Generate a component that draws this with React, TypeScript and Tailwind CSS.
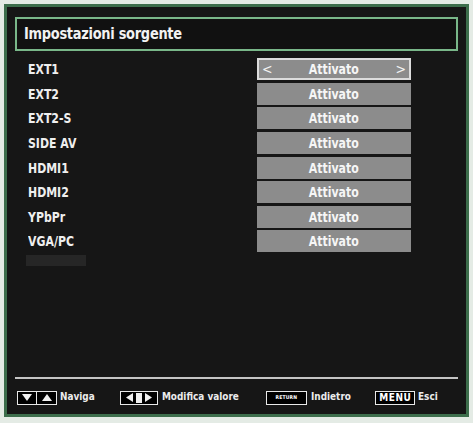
const rows = ["EXT1", "EXT2", "EXT2-S", "SIDE AV", "HDMI1", "HDMI2", "YPbPr", "VGA/PC"];

const font = { fontFamily: '"DejaVu Sans Condensed", "DejaVu Sans", sans-serif' };

function KeyBox({ children, className = "" }: { children: React.ReactNode; className?: string }) {
  return (
    <span className={`flex h-[14px] items-center justify-center border-[1.5px] border-[#e8e8e8] bg-black ${className}`}>
      {children}
    </span>
  );
}

export default function App() {
  return (
    <div className="h-[423px] w-[473px] bg-[#e4ebe5] p-[4px]" style={font}>
      <div className="flex h-[413px] w-[465px] flex-col border-[3px] border-[#3d6e4c] bg-[#161616] px-[8px] pt-[10px]">
        {/* Title */}
        <div className="flex h-[34px] items-center border-2 border-[#79b789] bg-[#111] px-[7px]">
          <span className="origin-left scale-x-[0.9] text-[16px] font-bold tracking-[-0.3px] text-[#f2f2f2]">
            Impostazioni sorgente
          </span>
        </div>

        {/* Source list */}
        <div className="mt-[6px] flex flex-col">
          {rows.map((r, i) => (
            <div key={r} className="flex h-[24.6px] items-center">
              <span className="ml-[13px] w-[229px] origin-left scale-x-[0.9] text-[13.5px] font-bold text-[#efefef]">
                {r}
              </span>
              <div
                className={`relative flex h-[22px] w-[154px] items-center justify-center bg-[#8c8c8c] ${
                  i === 0 ? "border-2 border-[#dcdcdc]" : ""
                }`}
              >
                {i === 0 ? <span className="absolute left-[3px] text-[14px] text-[#f4f4f4]">&lt;</span> : null}
                <span className="scale-x-[0.9] text-[13.5px] font-bold text-[#f6f6f6]">Attivato</span>
                {i === 0 ? <span className="absolute right-[3px] text-[14px] text-[#f4f4f4]">&gt;</span> : null}
              </div>
            </div>
          ))}
          <div className="ml-[11px] mt-[1px] h-[11px] w-[60px] bg-[#262626]" />
        </div>

        <div className="flex-1" />

        {/* Footer */}
        <div className="h-[2px] bg-[#c4c4c4]" />
        <div className="flex h-[35px] items-center pt-[2px] text-[11px] font-bold text-[#ececec]">
          <div className="ml-[2px] flex items-center">
            <KeyBox className="w-[20px]">
              <svg width="10" height="7" viewBox="0 0 10 7"><path d="M0 0H10L5 7Z" fill="#f0f0f0" /></svg>
            </KeyBox>
            <KeyBox className="w-[20px] border-l-0">
              <svg width="10" height="7" viewBox="0 0 10 7"><path d="M0 7H10L5 0Z" fill="#f0f0f0" /></svg>
            </KeyBox>
            <span className="ml-[3px] scale-x-[0.9] origin-left">Naviga</span>
          </div>
          <div className="ml-[21px] flex items-center">
            <KeyBox className="w-[38px] gap-[3px]">
              <svg width="7" height="9" viewBox="0 0 7 9"><path d="M7 0V9L0 4.5Z" fill="#f0f0f0" /></svg>
              <span className="h-[10px] w-[6px] bg-[#f0f0f0]" />
              <svg width="7" height="9" viewBox="0 0 7 9"><path d="M0 0V9L7 4.5Z" fill="#f0f0f0" /></svg>
            </KeyBox>
            <span className="ml-[4px] scale-x-[0.9] origin-left whitespace-nowrap">Modifica valore</span>
          </div>
          <div className="ml-[19px] flex items-center">
            <KeyBox className="w-[41px] bg-[#3a3a3a]">
              <span className="text-[5px] leading-none tracking-[0.2px] text-white">RETURN</span>
            </KeyBox>
            <span className="ml-[4px] scale-x-[0.9] origin-left">Indietro</span>
          </div>
          <div className="ml-[20px] flex items-center">
            <KeyBox className="w-[40px] bg-[#5a5a5a]">
              <span className="text-[10px] leading-none tracking-[0.5px] text-white">MENU</span>
            </KeyBox>
            <span className="ml-[3px] scale-x-[0.9] origin-left">Esci</span>
          </div>
        </div>
      </div>
    </div>
  );
}
